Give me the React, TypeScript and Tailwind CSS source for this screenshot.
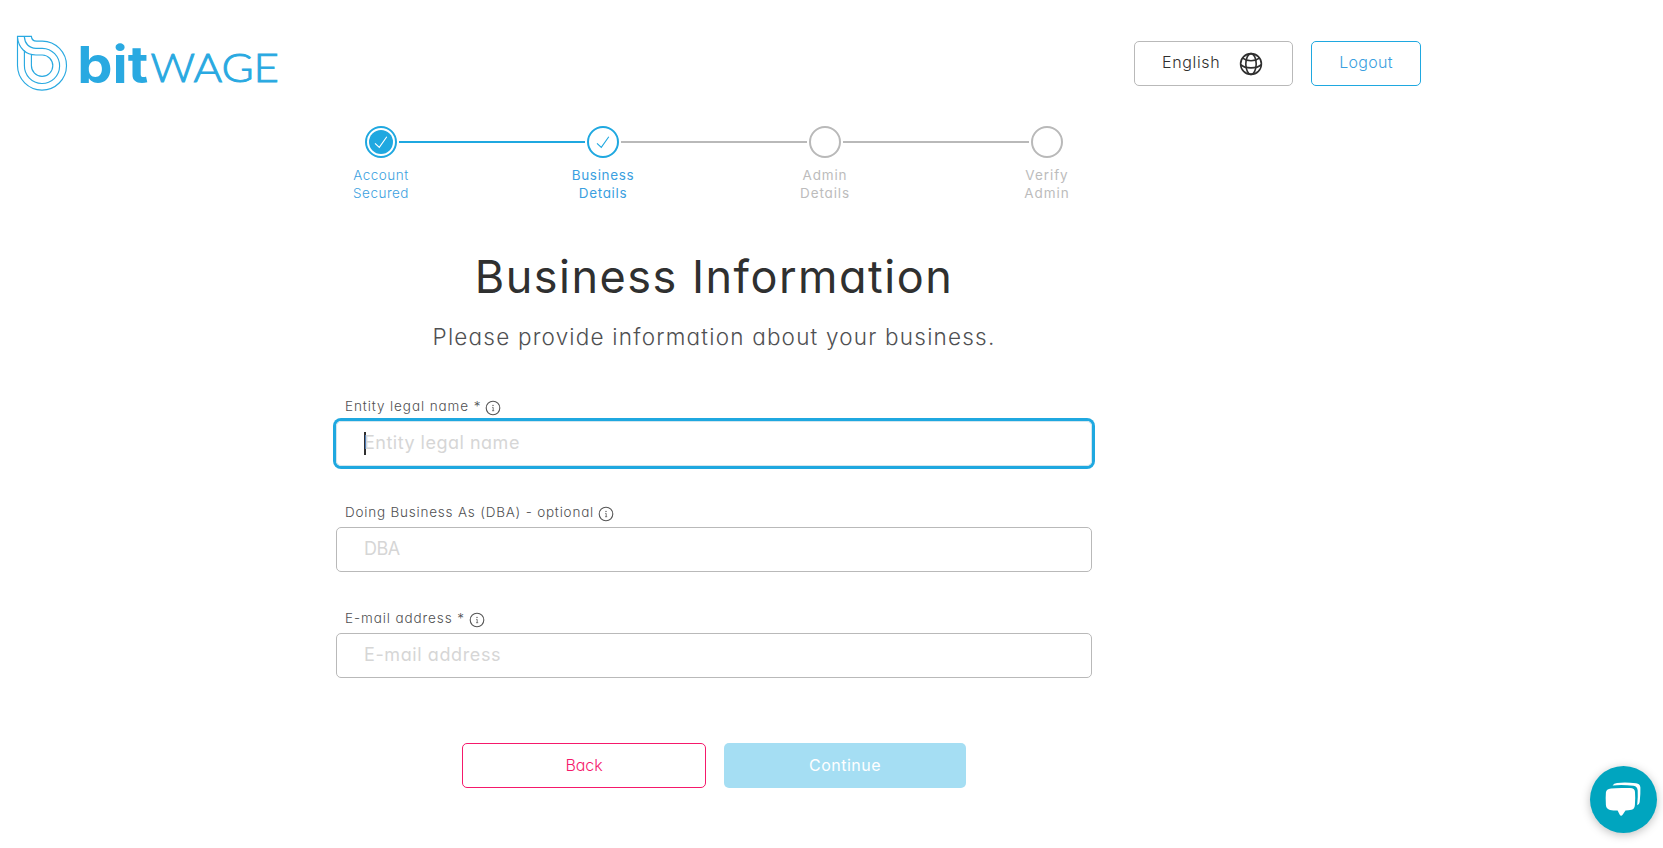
import { useState } from 'react';
import clsx from 'clsx';

function Logo() {
  return (
    <svg width="264" height="60" viewBox="16 34 264 60" fill="none">
      <g stroke="#29a9e1" strokeWidth="1.15">
        <path d="M17.5 36.4H31.4C31.6 39.6 33.4 41.1 36.6 41.1H42.3A24.5 24.5 0 1 1 17.5 65.6Z" />
        <path d="M24.3 36.4C24.7 43.5 29 48.3 36 48.3H42.3A17.6 17.6 0 1 1 24.4 65.6V50.5" />
        <path d="M17.5 37.5C18.5 47.5 25.5 55 36 55H42.3A10.7 10.7 0 1 1 31.4 65.6V54.4" />
      </g>
      <g fill="#29a9e1" fontFamily="Inter, 'Liberation Sans', sans-serif">
        <text x="77.2" y="82.6" fontSize="51.5" fontWeight="650" textLength="71" lengthAdjust="spacingAndGlyphs">bit</text>
        <text x="150.5" y="82.4" fontSize="40" fontWeight="300" fontFamily="Lato, sans-serif" textLength="128.5" lengthAdjust="spacingAndGlyphs" stroke="#29a9e1" strokeWidth="0.9">WAGE</text>
      </g>
    </svg>
  );
}

function GlobeIcon() {
  return (
    <svg width="24" height="24" viewBox="0 0 24 24" fill="none" stroke="#2f2f2f" strokeWidth="1.6">
      <circle cx="12" cy="12" r="10.4" />
      <ellipse cx="12" cy="12" rx="5.2" ry="10.4" />
      <path d="M3.6 6.2C8 9.6 16 9.6 20.4 6.2M1.8 12.6C6 17 18 17 22.2 12.6" />
    </svg>
  );
}

function InfoIcon() {
  return (
    <svg className="mt-1" width="16" height="16" viewBox="0 0 16 16" fill="none" stroke="#555" strokeWidth="1.1">
      <circle cx="8" cy="8" r="6.8" />
      <path d="M7.2 7.4H8.2V10.6M7.1 10.7H9.2" strokeWidth="0.8" />
      <circle cx="8" cy="5.4" r="0.7" fill="#555" stroke="none" />
    </svg>
  );
}

const steps = [
  { lines: ['Account', 'Secured'], state: 'done', tracking: 'tracking-[0.5px]' },
  { lines: ['Business', 'Details'], state: 'current', tracking: 'tracking-[0.65px]' },
  { lines: ['Admin', 'Details'], state: 'todo', tracking: 'tracking-[0.85px]' },
  { lines: ['Verify', 'Admin'], state: 'todo', tracking: 'tracking-[0.95px]' },
];

function Stepper() {
  return (
    <div className="mx-auto grid w-[888px] grid-cols-4">
      {steps.map(({ lines, state, tracking }, i) => (
        <div key={i} className="flex flex-col items-center">
          <div className="flex w-full items-center">
            <div className={clsx('h-0.5 flex-1', i === 0 ? 'bg-transparent' : i === 1 ? 'bg-[#1fa8e0]' : 'bg-[#b9b9b9]')} />
            <div
              className={clsx(
                'mx-0.5 flex size-8 items-center justify-center rounded-full border-2',
                state === 'todo' ? 'border-[#b9b9b9]' : 'border-[#1fa8e0]'
              )}
            >
              {state !== 'todo' && (
                <div className={clsx('flex size-6 items-center justify-center rounded-full', state === 'done' ? 'bg-[#1fa8e0] text-white' : 'text-[#1fa8e0]')}>
                  <svg width="14" height="14" viewBox="0 0 14 14" fill="none" stroke="currentColor" strokeWidth="1.1">
                    <path d="M1 8.3L5.3 12.4L12.8 1.8" />
                  </svg>
                </div>
              )}
            </div>
            <div className={clsx('h-0.5 flex-1', i === 3 ? 'bg-transparent' : i === 0 ? 'bg-[#1fa8e0]' : 'bg-[#b9b9b9]')} />
          </div>
          <div
            className={clsx(
              'mt-2 text-center text-[13.5px] leading-[18px]',
              tracking,
              state === 'done' && 'font-light text-[#3b9fe0]',
              state === 'current' && 'text-[#3b9fe0]',
              state === 'todo' && 'text-[#bcbcbc]'
            )}
          >
            {lines[0]}
            <br />
            {lines[1]}
          </div>
        </div>
      ))}
    </div>
  );
}

const fields = [
  { id: 'entity', label: 'Entity legal name *', placeholder: 'Entity legal name', labelTracking: 'tracking-[0.9px]', tracking: 'tracking-[0.5px]' },
  { id: 'dba', label: 'Doing Business As (DBA) - optional', placeholder: 'DBA', labelTracking: 'tracking-[0.79px]', tracking: 'tracking-[-0.5px]' },
  { id: 'email', label: 'E-mail address *', placeholder: 'E-mail address', labelTracking: 'tracking-[0.9px]', tracking: 'tracking-[0.6px]' },
];

export default function App() {
  const [focused, setFocused] = useState('entity');

  return (
    <div className="min-h-screen overflow-hidden bg-white font-['Inter','Liberation_Sans',sans-serif] [font-feature-settings:'cv11']">
      <div className="w-[1428px]">
        <header className="flex h-[126px] items-start justify-between pl-4 pr-[7px]">
          <div className="pt-[34px]">
            <Logo />
          </div>
          <div className="flex gap-[18px] pt-[41px]">
            <button className="flex h-[45px] w-[159px] items-center rounded-[5px] border border-[#b9b9b9] pl-[27px] text-base font-[350] tracking-[0.65px] text-[#2f2f2f]">
              <span className="-mt-1 w-[77px] text-left">English</span>
              <GlobeIcon />
            </button>
            <button className="h-[45px] w-[110px] rounded-[5px] border border-[#1fa8e0] pb-1 text-base font-light tracking-[0.3px] text-[#3b9fe0]">
              Logout
            </button>
          </div>
        </header>

        <Stepper />

        <main className="mx-auto flex w-[756px] flex-col items-center pt-[45px]">
          <h1 className="text-[45px] leading-[60px] font-[370] tracking-[1.5px] text-[#2f3030]">Business Information</h1>
          <p className="mt-[15px] text-[22.5px] leading-[30px] font-[350] tracking-[1.2px] text-[#4f5052]">
            Please provide information about your business.
          </p>

          <form className="mt-11 flex w-full flex-col gap-9">
            {fields.map((f) => (
              <div key={f.id}>
                <label htmlFor={f.id} className="mb-[5px] flex h-5 items-center gap-1 pl-[9px] text-[13.5px] font-[350] text-[#4f5052]">
                  <span className={f.labelTracking}>{f.label}</span>
                  <InfoIcon />
                </label>
                <div
                  className={clsx(
                    'flex h-[45px] items-center rounded-[5px] border pl-[27px]',
                    focused === f.id ? 'border-[#d3e6ee] ring-[3px] ring-[#1fa8e0]' : 'border-[#b9b9b9]'
                  )}
                >
                  {focused === f.id && <span className="-mr-0.5 h-[23px] w-0.5 bg-[#2f2f2f]" />}
                  <input
                    id={f.id}
                    onFocus={() => setFocused(f.id)}
                    placeholder={f.placeholder}
                    className={clsx('-mt-0.5 h-10 flex-1 bg-transparent text-lg outline-none placeholder:text-[#d6d6d6]', f.tracking)}
                  />
                </div>
              </div>
            ))}
          </form>

          <div className="mt-[65px] flex gap-[18px]">
            <button className="h-[45px] w-[244px] rounded-[5px] border border-[#f5196b] pb-0.5 text-base font-light tracking-[-0.1px] text-[#f5196b]">Back</button>
            <button className="h-[45px] w-[242px] rounded-[5px] bg-[#a5def3] pb-0.5 text-base font-[370] tracking-[0.5px] text-white">Continue</button>
          </div>
        </main>
      </div>

      <button className="fixed right-[6px] bottom-[15px] flex size-[67px] items-center justify-center rounded-full bg-[#00a5bf] pr-0.5 shadow-[0_2px_10px_rgba(0,0,0,0.25)]">
        <svg width="36" height="36" viewBox="0 0 36 36" fill="#fff">
          <path d="M6 6.6Q12 5.5 25 6.1Q29.8 6.3 30 10Q30.5 16 29.9 23Q29.7 27 26.5 27.7Q23.5 28.5 20.5 28.5L17.8 32.6Q16 35 14.6 32.6L12.6 28.5Q8 28.5 5 27.9Q1.3 27.2 .9 23Q.4 16 .9 10.5Q1.2 7.2 6 6.6Z" />
          <path d="M7.5 3.4Q8.8 1.4 12 1Q20 .1 31 1.2Q35.1 1.6 35.4 5.5Q35.6 12 34.7 20Q34.4 22.5 32.2 23.2Q33.1 15 32.7 8.5Q32.4 4.3 28.5 3.7Q18 2.7 7.5 3.4Z" />
        </svg>
      </button>
    </div>
  );
}
